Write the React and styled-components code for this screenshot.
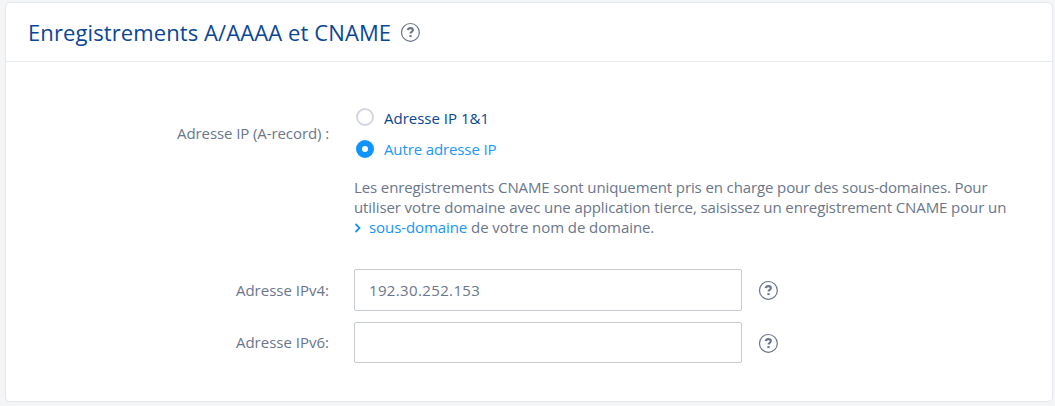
import React from 'react';
import styled, { createGlobalStyle } from 'styled-components';

const Global = createGlobalStyle`
  * { box-sizing: border-box; }
  body { margin: 0; background: #f4f5f7; font: 15px/20px "Open Sans", sans-serif; color: #6b768b; overflow: hidden; }
`;
const Card = styled.section`
  margin: 2px 2px 0 5px; height: 400px; background: #fff;
  border: 1px solid #e4e7ed; border-radius: 5px;
`;
const Header = styled.header`
  display: flex; align-items: center; gap: 9px; height: 59px; padding: 0 22px;
  border-bottom: 1px solid #e6e8ec;
`;
const Title = styled.h1`
  margin: 0; font-size: 22px; line-height: 30px; font-weight: 400; letter-spacing: 0.1px; color: #0b4694;
`;
const Row = styled.div`
  display: grid; grid-template-columns: 323px 388px 22px; align-items: center;
  height: ${p => p.$height}px; margin-top: ${p => p.$gap || 0}px;
`;
const Label = styled.label`
  text-align: right; letter-spacing: ${p => p.$tracking || 0}px;
  padding-bottom: ${p => p.$lift || 0}px;
`;
const Radios = styled.div`margin-left: 27px; display: grid; gap: 11px;`;
const Option = styled.label`
  display: flex; align-items: center; gap: 10px;
  letter-spacing: ${p => p.$selected ? '-0.12px' : '0'};
  color: ${p => p.$selected ? '#2097fa' : '#0b4694'};
`;
const Radio = styled.span`
  width: 18px; height: 18px; margin-bottom: ${p => p.$selected ? 1 : 2}px; border-radius: 50%; background: #fff;
  border: ${p => p.$selected ? '6px solid #1195fc' : '2px solid #d3d7e1'};
`;
const Note = styled.p`margin: 18px 0 0 348px; width: 670px;`;
const Line = styled.span`display: block; white-space: nowrap; letter-spacing: ${p => p.$tracking}px;`;
const Link = styled.a`color: #1695fa;`;
const Chevron = styled.svg`width: 8px; height: 10px; margin-right: 7px;`;
const Input = styled.input`
  margin-left: 25px; width: 388px; height: ${p => p.$height}px; padding: 0 14px;
  border: 1px solid #c6cbd2; border-radius: 2px; outline: none;
  font: inherit; letter-spacing: 0.36px; color: inherit;
`;
const HelpSvg = styled.svg`display: block; margin: ${p => p.$top || 0}px 0 0 ${p => p.$left || 0}px;`;
const Help = ({ left, top }) => (
  <HelpSvg $left={left} $top={top} width="22" height="22" viewBox="0.6 -1.4 22 22" fill="none" stroke="#6a758b">
    <circle cx="11" cy="10" r="8.9" strokeWidth="1.2" />
    <path d="M8.4 7.8C8.6 6.4 9.6 5.7 11 5.7c1.5 0 2.5.7 2.5 2 0 1.7-2.4 1.8-2.4 3.4" strokeWidth="2.1" />
    <path d="M11.1 12.7v2" strokeWidth="2.2" />
  </HelpSvg>
);

export default function App() {
  return (
    <>
      <Global />
      <Card>
        <Header><Title>Enregistrements A/AAAA et CNAME</Title><Help /></Header>
        <Row $height={51} $gap={46}>
          <Label $tracking={-0.09} $lift={2}>Adresse IP (A-record) :</Label>
          <Radios>
            <Option><Radio />Adresse IP 1&amp;1</Option>
            <Option $selected><Radio $selected />Autre adresse IP</Option>
          </Radios>
        </Row>
        <Note>
          <Line $tracking={-0.115}>Les enregistrements CNAME sont uniquement pris en charge pour des sous-domaines. Pour</Line>
          <Line $tracking={-0.1}>utiliser votre domaine avec une application tierce, saisissez un enregistrement CNAME pour un</Line>
          <Line $tracking={-0.08}>
            <Chevron viewBox="0 0 8 10" fill="none" stroke="#1695fa" strokeWidth="1.8"><path d="M1.5 1l4 4-4 4" /></Chevron>
            <Link>sous-domaine</Link> de votre nom de domaine.
          </Line>
        </Note>
        <Row $height={42} $gap={32}>
          <Label>Adresse IPv4:</Label><Input $height={42} defaultValue="192.30.252.153" /><Help left={41} />
        </Row>
        <Row $height={41} $gap={11}>
          <Label $lift={2}>Adresse IPv6:</Label><Input $height={41} /><Help left={41} top={1} />
        </Row>
      </Card>
    </>
  );
}
